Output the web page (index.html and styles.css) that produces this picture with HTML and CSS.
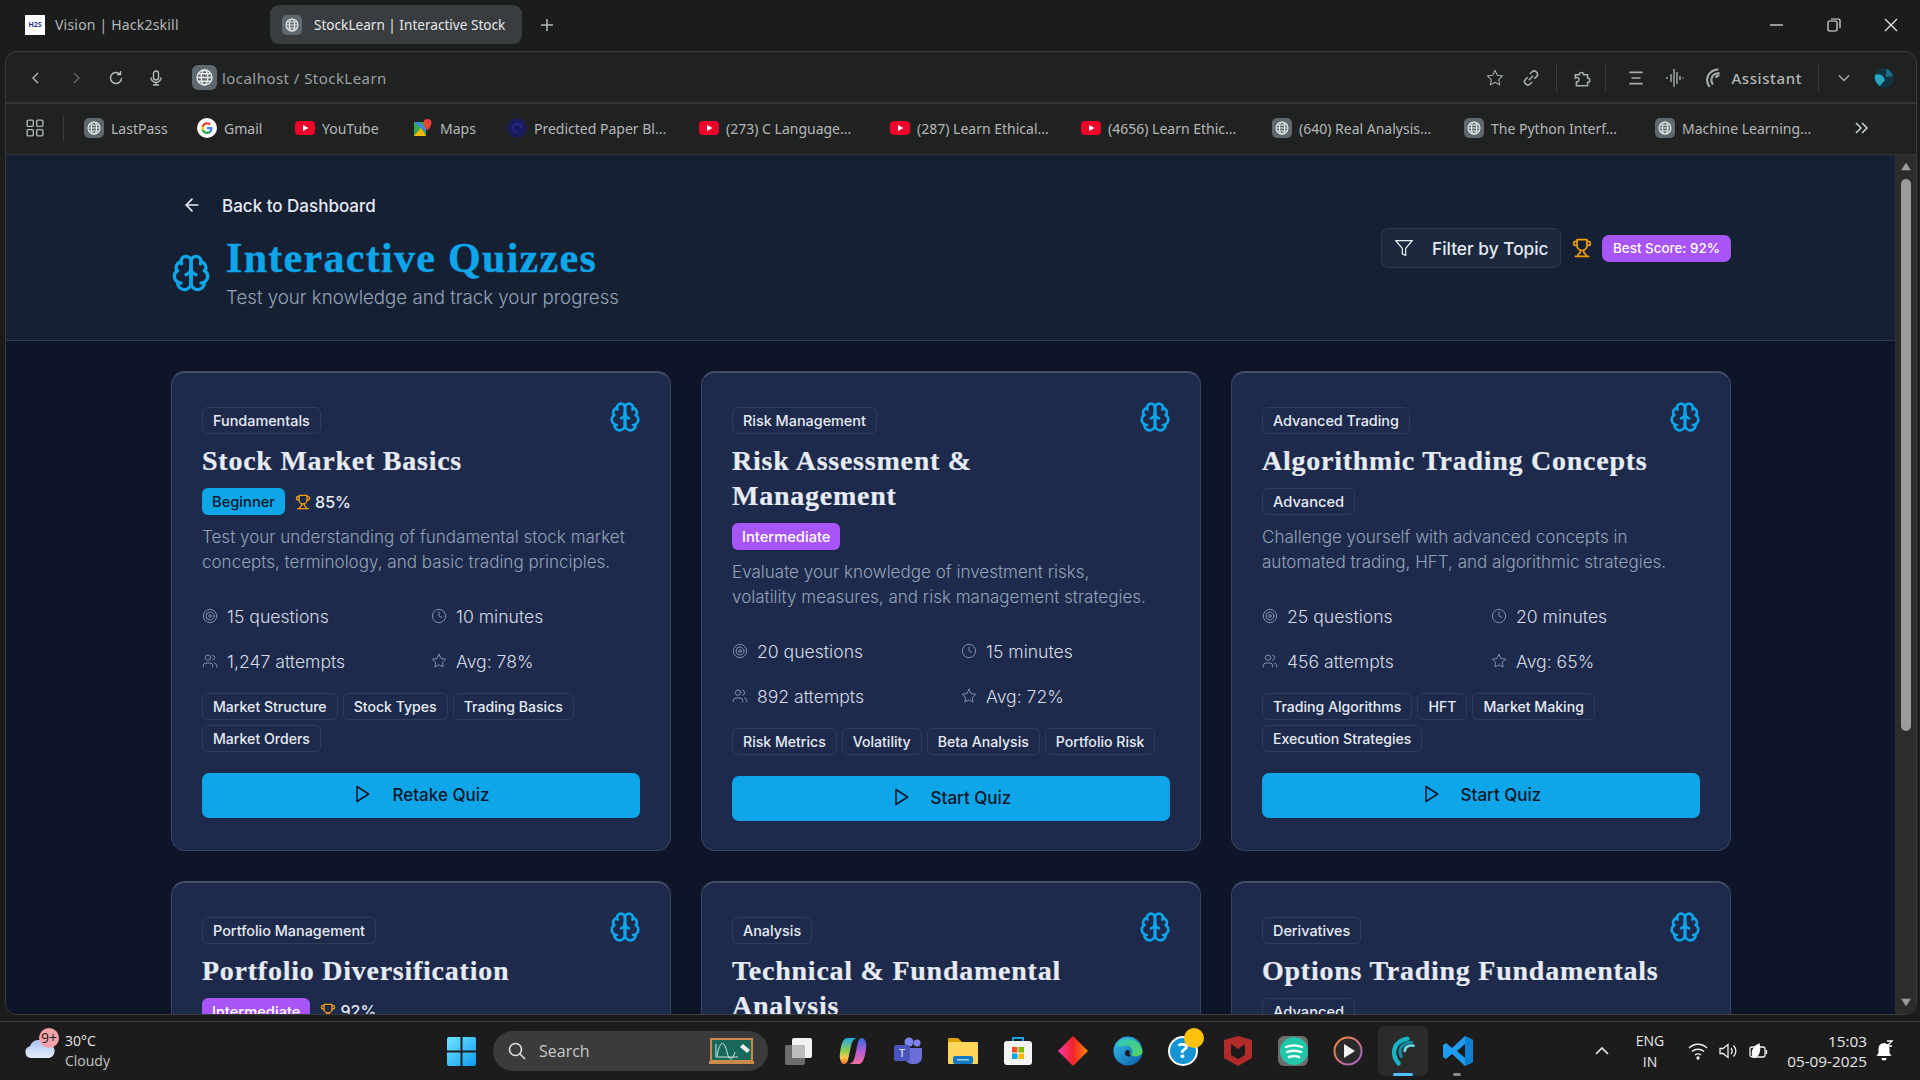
FILE: index.html
```html
<!DOCTYPE html>
<html lang="en">
  <head>
    <meta charset="UTF-8" />
    <title>StockLearn | Interactive Stock Quizzes</title>
    <link rel="stylesheet" href="styles.css">
  </head>
  <body>
    <svg class="sprite" xmlns="http://www.w3.org/2000/svg">
      <symbol id="i-brain" viewBox="0 0 24 24"><path d="M12 5a3 3 0 1 0-5.997.125 4 4 0 0 0-2.526 5.77 4 4 0 0 0 .556 6.588A4 4 0 1 0 12 18Z"/><path d="M12 5a3 3 0 1 1 5.997.125 4 4 0 0 1 2.526 5.77 4 4 0 0 1-.556 6.588A4 4 0 1 1 12 18Z"/><path d="M15 13a4.5 4.5 0 0 1-3-4 4.5 4.5 0 0 1-3 4"/><path d="M12 9v9"/><path d="M17.599 6.5a3 3 0 0 0 .399-1.375"/><path d="M6.003 5.125A3 3 0 0 0 6.401 6.5"/><path d="M3.477 10.896a4 4 0 0 1 .585-.396"/><path d="M19.938 10.5a4 4 0 0 1 .585.396"/><path d="M6 18a4 4 0 0 1-1.967-.516"/><path d="M19.967 17.484A4 4 0 0 1 18 18"/></symbol>
      <symbol id="i-trophy" viewBox="0 0 24 24"><path d="M6 9H4.5a2.5 2.5 0 0 1 0-5H6"/><path d="M18 9h1.5a2.5 2.5 0 0 0 0-5H18"/><path d="M4 22h16"/><path d="M10 14.66V17c0 .55-.47.98-.97 1.21C7.85 18.75 7 20.24 7 22"/><path d="M14 14.66V17c0 .55.47.98.97 1.21C16.15 18.75 17 20.24 17 22"/><path d="M18 2H6v7a6 6 0 0 0 12 0V2Z"/></symbol>
      <symbol id="i-target" viewBox="0 0 24 24"><circle cx="12" cy="12" r="10"/><circle cx="12" cy="12" r="6"/><circle cx="12" cy="12" r="2"/></symbol>
      <symbol id="i-clock" viewBox="0 0 24 24"><circle cx="12" cy="12" r="10"/><polyline points="12 6 12 12 16 14"/></symbol>
      <symbol id="i-users" viewBox="0 0 24 24"><path d="M16 21v-2a4 4 0 0 0-4-4H6a4 4 0 0 0-4 4v2"/><circle cx="9" cy="7" r="4"/><path d="M22 21v-2a4 4 0 0 0-3-3.87"/><path d="M16 3.13a4 4 0 0 1 0 7.75"/></symbol>
      <symbol id="i-star" viewBox="0 0 24 24"><polygon points="12 2 15.09 8.26 22 9.27 17 14.14 18.18 21.02 12 17.77 5.82 21.02 7 14.14 2 9.27 8.91 8.26 12 2"/></symbol>
      <symbol id="i-play" viewBox="0 0 24 24"><polygon points="6 3 20 12 6 21 6 3"/></symbol>
      <symbol id="i-filter" viewBox="0 0 24 24"><polygon points="22 3 2 3 10 12.46 10 19 14 21 14 12.46 22 3"/></symbol>
      <symbol id="i-arrow" viewBox="0 0 24 24"><path d="m12 19-7-7 7-7"/><path d="M19 12H5"/></symbol>
      <symbol id="i-globe" viewBox="0 0 20 20"><rect width="20" height="20" rx="5" fill="#5f6a70" stroke="none"/><g fill="none" stroke="#e6e8e8" stroke-width="1.1"><circle cx="10" cy="10" r="6"/><ellipse cx="10" cy="10" rx="2.6" ry="6"/><path d="M4 10h12M4.9 7h10.2M4.9 13h10.2"/></g></symbol>
      <symbol id="i-yt" viewBox="0 0 20 20"><rect y="3" width="20" height="14" rx="4" fill="#f4002a" stroke="none"/><polygon points="8 7 13.500 10 8 13" fill="#fff" stroke="none"/></symbol>
    </svg>

    <div class="tabbar">
      <div class="tab">
        <span class="h2s-icon">H2S</span>
        <span>Vision | Hack2skill</span>
      </div>
      <div class="tab tab-active">
        <svg class="fav"><use href="#i-globe"/></svg>
        <span class="tab-title">StockLearn | Interactive Stock</span>
      </div>
      <svg class="tab-plus" viewBox="0 0 16 16"><path d="M8 2v12M2 8h12"/></svg>
      <div class="win-controls">
        <svg viewBox="0 0 16 16"><path d="M1 8h13"/></svg>
        <svg viewBox="0 0 16 16"><rect x="2" y="4" width="9" height="10" rx="1.500"/><path d="M5 2h7.500A1.500 1.500 0 0 1 14 3.500V11"/></svg>
        <svg viewBox="0 0 16 16"><path d="M2 2l12 12M14 2L2 14"/></svg>
      </div>
    </div>

    <div class="window">
      <div class="toolbar">
        <div class="nav-icons">
          <svg viewBox="0 0 16 16"><path d="M10 3L5 8l5 5"/></svg>
          <svg class="dim" viewBox="0 0 16 16"><path d="M6 3l5 5-5 5"/></svg>
          <svg viewBox="0 0 16 16"><path d="M13.500 8a5.500 5.500 0 1 1-1.700-4M12.500 1v3.500H9"/></svg>
          <svg viewBox="0 0 16 16"><rect x="5.500" y="1" width="5" height="9" rx="2.500"/><path d="M3 7.500a5 5 0 0 0 10 0M8 12.500V15M5 15h6"/></svg>
        </div>
        <svg class="fav fav-url"><use href="#i-globe"/></svg>
        <span class="url">localhost / StockLearn</span>
        <div class="tool-right">
          <svg class="tool-icon star" viewBox="0 0 24 24"><use href="#i-star"/></svg>
          <svg class="tool-icon link" viewBox="0 0 16 16"><path d="M7 4.500l1.800-1.800a2.900 2.900 0 0 1 4.100 4.100L11 8.700M9 11.500l-1.800 1.800a2.900 2.900 0 0 1-4.100-4.100L5 7.300M6 10l4-4"/></svg>
          <span class="tool-sep sep-a"></span>
          <svg class="tool-icon puzzle" viewBox="0 0 18 18"><path d="M3 6h3.500a2 2 0 1 1 4 0H14v3a2 2 0 1 1 0 4v3H4v-3.500a2 2 0 1 0-1-3.500Z"/></svg>
          <span class="tool-sep sep-b"></span>
          <svg class="tool-icon list" viewBox="0 0 16 16"><path d="M2 3h12M4 8h8M2 13h12"/></svg>
          <svg class="tool-icon wave" viewBox="0 0 20 20"><path d="M2 9v2M6 6v8M9 1v18M12 4v12M15 8v4M18 9.500v1"/></svg>
          <svg class="tool-icon spark" viewBox="0 0 20 20"><path d="M6 18C1.500 12 4 3 14 2M9 16C6 11 8 6 15 5.500M12 10c0-1.500 1-2.500 3-2.500"/></svg>
          <span class="assistant">Assistant</span>
          <span class="tool-sep sep-c"></span>
          <svg class="tool-icon chevron" viewBox="0 0 16 16"><path d="M3 5.500l5 5 5-5"/></svg>
          <svg class="avatar" viewBox="0 0 20 20"><circle cx="10" cy="10" r="10" fill="#12343f"/><path d="M1 7c5-2 8 0 10 5l-5 6C3 16 0 12 1 7Z" fill="#2ba6c4"/><path d="M12 1c4 1 6 4 7 7l-7 1Z" fill="#1d6f87"/></svg>
        </div>
      </div>

      <div class="bookmarks">
        <svg class="apps" viewBox="0 0 16 16"><rect x="1" y="1" width="5.500" height="5.500" rx="1"/><rect x="9.500" y="1" width="5.500" height="5.500" rx="1"/><rect x="1" y="9.500" width="5.500" height="5.500" rx="1"/><rect x="9.500" y="9.500" width="5.500" height="5.500" rx="1"/></svg>
        <span class="bm-sep"></span>
        <div class="bm bm-lastpass"><svg class="fav"><use href="#i-globe"/></svg><span>LastPass</span></div>
        <div class="bm bm-gmail">
          <svg class="fav" viewBox="0 0 20 20"><circle cx="10" cy="10" r="10" fill="#fff"/><path d="M15.500 10.200c0-.400 0-.800-.100-1.200H10v2.300h3.100a2.700 2.700 0 0 1-1.100 1.700v1.500h1.900c1-1 1.600-2.500 1.600-4.300Z" fill="#4285f4"/><path d="M10 16c1.600 0 2.900-.500 3.900-1.500L12 13c-.5.400-1.200.600-2 .600-1.500 0-2.800-1-3.300-2.400H4.800v1.500A6 6 0 0 0 10 16Z" fill="#34a853"/><path d="M6.700 11.200a3.600 3.600 0 0 1 0-2.300V7.400H4.800a6 6 0 0 0 0 5.300Z" fill="#fbbc05"/><path d="M10 6.400c.9 0 1.600.300 2.200.900l1.700-1.700A6 6 0 0 0 4.800 7.400l1.900 1.500C7.200 7.400 8.500 6.400 10 6.400Z" fill="#ea4335"/></svg>
          <span>Gmail</span>
        </div>
        <div class="bm bm-yt"><svg class="fav"><use href="#i-yt"/></svg><span>YouTube</span></div>
        <div class="bm bm-maps">
          <svg class="fav" viewBox="0 0 20 20"><polygon points="1 4 13 4 13 18 1 18" fill="#34a853"/><polygon points="1 18 8 10 13 18" fill="#fbbc05"/><polygon points="1 4 6 4 13 11 13 14" fill="#4285f4"/><path d="M14.500 1a4 4 0 0 0-4 4c0 3 4 7.500 4 7.500s4-4.500 4-7.500a4 4 0 0 0-4-4Z" fill="#ea4335"/></svg>
          <span>Maps</span>
        </div>
        <div class="bm bm-paper">
          <svg class="fav" viewBox="0 0 20 20"><circle cx="10" cy="10" r="10" fill="#1a1a5c"/><path d="M10 14a4 4 0 1 1 4-4" fill="none" stroke="#2e2ea0" stroke-width="1.500"/></svg>
          <span>Predicted Paper Bl...</span>
        </div>
        <div class="bm bm-c"><svg class="fav"><use href="#i-yt"/></svg><span>(273) C Language...</span></div>
        <div class="bm bm-eth"><svg class="fav"><use href="#i-yt"/></svg><span>(287) Learn Ethical...</span></div>
        <div class="bm bm-eth2"><svg class="fav"><use href="#i-yt"/></svg><span>(4656) Learn Ethic...</span></div>
        <div class="bm bm-real"><svg class="fav"><use href="#i-globe"/></svg><span>(640) Real Analysis...</span></div>
        <div class="bm bm-py"><svg class="fav"><use href="#i-globe"/></svg><span>The Python Interf...</span></div>
        <div class="bm bm-ml"><svg class="fav"><use href="#i-globe"/></svg><span>Machine Learning...</span></div>
        <svg class="bm-more" viewBox="0 0 16 16"><path d="M3 3l5 5-5 5M9 3l5 5-5 5"/></svg>
      </div>

      <div class="viewport">
        <div class="page">
          <header class="page-header">
            <div class="header-left">
              <a class="back-link">
                <svg class="icon icon-back"><use href="#i-arrow"/></svg>
                <span>Back to Dashboard</span>
              </a>
              <div class="title-row">
                <svg class="icon icon-title"><use href="#i-brain"/></svg>
                <div>
                  <h1>Interactive Quizzes</h1>
                  <p class="subtitle">Test your knowledge and track your progress</p>
                </div>
              </div>
            </div>
            <div class="header-right">
              <button class="filter-btn">
                <svg class="icon icon-filter"><use href="#i-filter"/></svg>
                <span>Filter by Topic</span>
              </button>
              <svg class="icon icon-best"><use href="#i-trophy"/></svg>
              <span class="best-score">Best Score: 92%</span>
            </div>
          </header>

          <main class="quiz-grid">
            <article class="card">
              <div class="card-top">
                <span class="chip">Fundamentals</span>
                <svg class="icon icon-card"><use href="#i-brain"/></svg>
              </div>
              <h3>Stock Market Basics</h3>
              <div class="level-row">
                <span class="level level-beginner">Beginner</span>
                <svg class="icon icon-score"><use href="#i-trophy"/></svg>
                <span class="score">85%</span>
              </div>
              <p class="desc">Test your understanding of fundamental stock market<br>concepts, terminology, and basic trading principles.</p>
              <div class="stats">
                <div class="stat"><svg class="icon"><use href="#i-target"/></svg>15 questions</div>
                <div class="stat"><svg class="icon"><use href="#i-clock"/></svg>10 minutes</div>
                <div class="stat"><svg class="icon"><use href="#i-users"/></svg>1,247 attempts</div>
                <div class="stat"><svg class="icon"><use href="#i-star"/></svg>Avg: 78%</div>
              </div>
              <div class="chips">
                <span class="chip">Market Structure</span>
                <span class="chip">Stock Types</span>
                <span class="chip">Trading Basics</span>
                <span class="chip">Market Orders</span>
              </div>
              <button class="quiz-btn"><svg class="icon icon-play"><use href="#i-play"/></svg>Retake Quiz</button>
            </article>

            <article class="card">
              <div class="card-top">
                <span class="chip">Risk Management</span>
                <svg class="icon icon-card"><use href="#i-brain"/></svg>
              </div>
              <h3>Risk Assessment &amp;<br>Management</h3>
              <div class="level-row">
                <span class="level level-intermediate">Intermediate</span>
              </div>
              <p class="desc">Evaluate your knowledge of investment risks,<br>volatility measures, and risk management strategies.</p>
              <div class="stats">
                <div class="stat"><svg class="icon"><use href="#i-target"/></svg>20 questions</div>
                <div class="stat"><svg class="icon"><use href="#i-clock"/></svg>15 minutes</div>
                <div class="stat"><svg class="icon"><use href="#i-users"/></svg>892 attempts</div>
                <div class="stat"><svg class="icon"><use href="#i-star"/></svg>Avg: 72%</div>
              </div>
              <div class="chips">
                <span class="chip">Risk Metrics</span>
                <span class="chip">Volatility</span>
                <span class="chip">Beta Analysis</span>
                <span class="chip">Portfolio Risk</span>
              </div>
              <button class="quiz-btn"><svg class="icon icon-play"><use href="#i-play"/></svg>Start Quiz</button>
            </article>

            <article class="card">
              <div class="card-top">
                <span class="chip">Advanced Trading</span>
                <svg class="icon icon-card"><use href="#i-brain"/></svg>
              </div>
              <h3>Algorithmic Trading Concepts</h3>
              <div class="level-row">
                <span class="level level-advanced">Advanced</span>
              </div>
              <p class="desc">Challenge yourself with advanced concepts in<br>automated trading, HFT, and algorithmic strategies.</p>
              <div class="stats">
                <div class="stat"><svg class="icon"><use href="#i-target"/></svg>25 questions</div>
                <div class="stat"><svg class="icon"><use href="#i-clock"/></svg>20 minutes</div>
                <div class="stat"><svg class="icon"><use href="#i-users"/></svg>456 attempts</div>
                <div class="stat"><svg class="icon"><use href="#i-star"/></svg>Avg: 65%</div>
              </div>
              <div class="chips">
                <span class="chip">Trading Algorithms</span>
                <span class="chip">HFT</span>
                <span class="chip">Market Making</span>
                <span class="chip">Execution Strategies</span>
              </div>
              <button class="quiz-btn"><svg class="icon icon-play"><use href="#i-play"/></svg>Start Quiz</button>
            </article>

            <article class="card card-cut">
              <div class="card-top">
                <span class="chip">Portfolio Management</span>
                <svg class="icon icon-card"><use href="#i-brain"/></svg>
              </div>
              <h3>Portfolio Diversification</h3>
              <div class="level-row">
                <span class="level level-intermediate">Intermediate</span>
                <svg class="icon icon-score"><use href="#i-trophy"/></svg>
                <span class="score">92%</span>
              </div>
            </article>

            <article class="card card-cut">
              <div class="card-top">
                <span class="chip">Analysis</span>
                <svg class="icon icon-card"><use href="#i-brain"/></svg>
              </div>
              <h3>Technical &amp; Fundamental<br>Analysis</h3>
            </article>

            <article class="card card-cut">
              <div class="card-top">
                <span class="chip">Derivatives</span>
                <svg class="icon icon-card"><use href="#i-brain"/></svg>
              </div>
              <h3>Options Trading Fundamentals</h3>
              <div class="level-row">
                <span class="level level-advanced">Advanced</span>
              </div>
            </article>
          </main>
        </div>
        <div class="scrollbar">
          <svg class="scroll-arrow" viewBox="0 0 10 10"><path d="M5 1.500L9.500 8.500H.5Z"/></svg>
          <div class="scroll-track"><div class="scroll-thumb"></div></div>
          <svg class="scroll-arrow" viewBox="0 0 10 10"><path d="M5 8.500L.5 1.500h9Z"/></svg>
        </div>
      </div>
    </div>

    <footer class="taskbar">
      <div class="weather">
        <svg class="cloud" viewBox="0 0 30 20"><defs><linearGradient id="cloud-fill" x1="0" y1="0" x2="0" y2="1"><stop offset="0" stop-color="#a9c4f5"/><stop offset="1" stop-color="#e4edfb"/></linearGradient></defs><path d="M6 20a6 6 0 0 1-1-11.800A9 9 0 0 1 21 6a7 7 0 0 1 3 14Z" fill="url(#cloud-fill)"/></svg>
        <span class="weather-badge">9+</span>
        <div class="weather-text">
          <div class="temp">30°C</div>
          <div class="cond">Cloudy</div>
        </div>
      </div>

      <svg class="win-logo" viewBox="0 0 29 29"><defs><linearGradient id="win-fill" x1="0" y1="0" x2="1" y2="1"><stop offset="0" stop-color="#6fe6ff"/><stop offset="1" stop-color="#0f9bf5"/></linearGradient></defs><path d="M0 2a2 2 0 0 1 2-2h11.500v13.500H0ZM15.500 0H27a2 2 0 0 1 2 2v11.500H15.500ZM0 15.500h13.500V29H2a2 2 0 0 1-2-2ZM15.500 15.500H29V27a2 2 0 0 1-2 2H15.500Z" fill="url(#win-fill)"/></svg>

      <div class="search-box">
        <svg class="search-icon" viewBox="0 0 18 18"><circle cx="7.500" cy="7.500" r="6"/><path d="M12 12l5 5"/></svg>
        <span>Search</span>
        <svg class="board" viewBox="0 0 45 26"><rect x="2" y="1" width="41" height="22" fill="#17685a" stroke="#c98a4b" stroke-width="2"/><rect y="23" width="45" height="3" fill="#c98a4b"/><path d="M8 18c3-16 7-16 10-4s6 6 8 0" fill="none" stroke="#cfe7df"/><path d="M7 6v13h22" fill="none" stroke="#cfe7df"/><path d="M31 9l3-3 7 6-3 3Z" fill="#eee"/></svg>
      </div>

      <div class="task-apps">
        <div class="task-app">
          <svg viewBox="0 0 30 30"><rect x="2" y="9" width="20" height="20" rx="2" fill="#6d6d6d"/><rect x="9" y="2" width="20" height="20" rx="2" fill="#f2f2f2"/><rect x="9" y="9" width="13" height="13" fill="#bdbdbd"/></svg>
        </div>
        <div class="task-app">
          <svg viewBox="0 0 30 30"><defs><linearGradient id="cop-a" x1="0" y1="0" x2="0" y2="1"><stop offset="0" stop-color="#1fa7e0"/><stop offset=".5" stop-color="#8fd14f"/><stop offset=".75" stop-color="#f7c948"/><stop offset="1" stop-color="#f0703c"/></linearGradient><linearGradient id="cop-b" x1="0" y1="0" x2="0" y2="1"><stop offset="0" stop-color="#2b6fe0"/><stop offset=".5" stop-color="#b45ad6"/><stop offset="1" stop-color="#f2709c"/></linearGradient></defs><path d="M9 2h10c-4 1-5 4-6 8l-3 14c-1 3-2 4-4 4-3 0-5-5-4-11C3 9 5 2 9 2Z" fill="url(#cop-a)"/><path d="M21 28H11c4-1 5-4 6-8l3-14c1-3 2-4 4-4 3 0 5 5 4 11-1 8-3 15-7 15Z" fill="url(#cop-b)"/></svg>
        </div>
        <div class="task-app">
          <svg viewBox="0 0 30 30"><circle cx="24" cy="7" r="3.500" fill="#7b83eb"/><circle cx="16" cy="6" r="4.500" fill="#7b83eb"/><path d="M12 12h17v9a7 7 0 0 1-7 7h-3a7 7 0 0 1-7-7Z" fill="#6a70d6"/><rect x="1" y="9" width="16" height="16" rx="2" fill="#4b53bc"/><text class="teams-t" x="9" y="21">T</text></svg>
        </div>
        <div class="task-app">
          <svg viewBox="0 0 30 30"><path d="M0 3a1 1 0 0 1 1-1h9l4 4h16v4H0Z" fill="#d9a200"/><rect y="6" width="30" height="22" rx="1" fill="#ffd65c"/><rect x="5" y="20" width="20" height="8" rx="2" fill="#1578c2"/><rect x="9" y="23" width="12" height="1.500" fill="#9bd0f5"/></svg>
        </div>
        <div class="task-app">
          <svg viewBox="0 0 30 30"><path d="M10 5V2h10v3" fill="none" stroke="#1ba1e2" stroke-width="2"/><rect x="1" y="5" width="28" height="24" rx="3" fill="#f5f5f5"/><rect x="9" y="11" width="5.500" height="5.500" fill="#f25022"/><rect x="15.500" y="11" width="5.500" height="5.500" fill="#7fba00"/><rect x="9" y="17.500" width="5.500" height="5.500" fill="#00a4ef"/><rect x="15.500" y="17.500" width="5.500" height="5.500" fill="#ffb900"/></svg>
        </div>
        <div class="task-app">
          <svg viewBox="0 0 30 30"><defs><linearGradient id="dia" x1="0" y1="0" x2="1" y2="0"><stop offset="0" stop-color="#f23aa6"/><stop offset=".5" stop-color="#f5222d"/><stop offset="1" stop-color="#f58a00"/></linearGradient></defs><path d="M15 0l15 15-15 15L0 15Z" fill="url(#dia)"/></svg>
        </div>
        <div class="task-app">
          <svg viewBox="0 0 30 30"><defs><linearGradient id="edge-a" x1="0" y1="0" x2="1" y2="1"><stop offset="0" stop-color="#35c1f1"/><stop offset="1" stop-color="#0c59a4"/></linearGradient><linearGradient id="edge-b" x1="0" y1="0" x2="1" y2="1"><stop offset="0" stop-color="#2bc7c0"/><stop offset="1" stop-color="#5bd35f"/></linearGradient></defs><circle cx="15" cy="15" r="14.500" fill="url(#edge-a)"/><path d="M3 9C8 0 26 0 29.500 15c.5 5-8 7-11 4 3-5-1-10-7-9-4 .5-7 1-8.500-1Z" fill="url(#edge-b)"/><path d="M15 14c-2 0-3.500 2-3 4 .5 2 3 3 6 2-1.500-1-2-3-1-5Z" fill="#1b1b1b"/></svg>
        </div>
        <div class="task-app task-help">
          <svg viewBox="0 0 30 30"><circle cx="15" cy="15" r="14" fill="#1494d2" stroke="#fff" stroke-width="2"/><text class="help-q" x="15" y="22">?</text></svg>
          <span class="help-dot"></span>
        </div>
        <div class="task-app">
          <svg viewBox="0 0 28 30"><path d="M0 4l14-4 14 4v18l-14 8-14-8Z" fill="#b22a2a"/><path d="M7 8v11l7 4 7-4V8l-7 5Z" fill="#1b1b1b"/></svg>
        </div>
        <div class="task-app">
          <svg viewBox="0 0 30 30"><rect width="30" height="30" rx="6" fill="#6d6d6d"/><circle cx="16" cy="15" r="14" fill="#22c7a9"/><path d="M8 11c5-2 11-2 16 0M9 16c4-1.500 10-1.500 14 0M11 21c3-1 7-1 10 0" fill="none" stroke="#f3fffb" stroke-width="2.400" stroke-linecap="round"/></svg>
        </div>
        <div class="task-app">
          <svg viewBox="0 0 30 30"><defs><linearGradient id="pl" x1="0" y1="0" x2="1" y2="1"><stop offset="0" stop-color="#f58a2a"/><stop offset="1" stop-color="#a15dd6"/></linearGradient></defs><circle cx="15" cy="15" r="13.500" fill="#2a2a2a" stroke="url(#pl)" stroke-width="2"/><path d="M11 8l11 7-11 7Z" fill="#f2f2f2"/></svg>
        </div>
        <div class="task-app task-active">
          <svg viewBox="0 0 30 34" fill="none" stroke-linecap="round"><path d="M10 31C1 20 4 6 20 3" stroke="#17b3c4" stroke-width="5"/><path d="M13 23C9 14 15 7 25 7" stroke="#0f8fa5" stroke-width="3.500"/><path d="M17 17c0-4 4-7 10-6" stroke="#6fdde8" stroke-width="3"/></svg>
          <span class="task-dot task-dot-on"></span>
        </div>
        <div class="task-app">
          <svg viewBox="0 0 30 30"><path d="M22 0l8 4v22l-8 4L9 18l-6 5-3-2V9l3-2 6 5Z" fill="#1f9cf0"/><path d="M22 8l-8 7 8 7Z" fill="#1b1b1b"/><path d="M22 0v30l8-4V4Z" fill="#0f7fd0"/></svg>
          <span class="task-dot"></span>
        </div>
      </div>

      <div class="tray">
        <svg class="tray-chevron" viewBox="0 0 16 16"><path d="M2 11l6-6 6 6"/></svg>
        <div class="lang"><div>ENG</div><div>IN</div></div>
        <svg class="tray-icon" viewBox="0 0 20 20"><path d="M1 7c5-5 13-5 18 0M4 10.500c3.500-3 8.500-3 12 0M7 14c2-1.500 4-1.500 6 0"/><circle cx="10" cy="17" r="1" fill="#fff"/></svg>
        <svg class="tray-icon" viewBox="0 0 20 20"><path d="M2 7.500h3l5-4v13l-5-4H2ZM13 7c1.500 2 1.500 4 0 6M15.500 4.500c3 3.500 3 7.500 0 11"/></svg>
        <svg class="tray-icon" viewBox="0 0 20 20"><rect x="2" y="6" width="15" height="10" rx="2"/><path d="M18.500 9v4"/><path d="M5 16c-2-6 1-11 6-13 1 4 1 10-3 13Z" fill="#fff"/></svg>
        <div class="clock"><div>15:03</div><div>05-09-2025</div></div>
        <svg class="bell" viewBox="0 0 20 22"><path d="M10 3a5.500 5.500 0 0 0-5.500 5.500V13L2.500 16h15l-2-3V8.500A5.500 5.500 0 0 0 10 3Z" fill="#fff"/><path d="M7.500 18h5a2.500 2.500 0 0 1-5 0Z" fill="#fff"/><path d="M13 1h5l-5 5h5" fill="none" stroke="#fff" stroke-width="1.300"/></svg>
      </div>
    </footer>
  </body>
</html>
```

FILE: styles.css
```css
* {
  box-sizing: border-box;
}
html,
body {
  margin: 0;
  height: 100%;
}
body {
  width: 1920px;
  height: 1080px;
  display: flex;
  flex-direction: column;
  overflow: hidden;
  background-color: #1b1c1c;
  font-family: "Noto Sans", sans-serif;
  color: #c9cccc;
}
.sprite {
  display: none;
}
.icon {
  width: 16px;
  height: 16px;
  flex: none;
  fill: none;
  stroke: currentColor;
  stroke-width: 2;
  stroke-linecap: round;
  stroke-linejoin: round;
}
.fav {
  width: 20px;
  height: 20px;
  flex: none;
}

/* browser tabs */
.tabbar {
  height: 51px;
  flex: none;
  display: flex;
  align-items: flex-start;
  padding-top: 5px;
  font-size: 14px;
  letter-spacing: 0.2px;
}
.tab {
  height: 39px;
  display: flex;
  align-items: center;
  gap: 10px;
  padding-left: 25px;
  width: 270px;
  color: #b5b8b8;
}
.h2s-icon {
  width: 20px;
  height: 20px;
  background-color: #fff;
  color: #26308c;
  font-size: 7px;
  font-weight: 700;
  line-height: 20px;
  text-align: center;
  letter-spacing: 0;
}
.tab-active {
  width: 252px;
  padding-left: 12px;
  gap: 12px;
  background-color: #3a3d3f;
  border-radius: 9px;
  color: #e6e8e8;
}
.tab-title {
  white-space: nowrap;
  font-size: 13.600px;
  letter-spacing: 0;
}
.tab-plus {
  width: 16px;
  height: 16px;
  margin: 12px 0 0 17px;
  fill: none;
  stroke: #b5b8b8;
  stroke-width: 1.500;
}
.win-controls {
  margin-left: auto;
  display: flex;
  gap: 41px;
  padding: 12px 21px 0 0;
}
.win-controls svg {
  width: 16px;
  height: 16px;
  fill: none;
  stroke: #e8e8e8;
  stroke-width: 1.200;
}

/* browser window */
.window {
  flex: none;
  height: 964px;
  margin: 0 3px 0 5px;
  border: 1px solid #3a3c3c;
  border-radius: 12px;
  overflow: hidden;
  display: flex;
  flex-direction: column;
  background-color: #202222;
}
.toolbar {
  height: 52px;
  flex: none;
  display: flex;
  align-items: center;
  border-bottom: 2px solid #343636;
  padding: 1px 0 0 22px;
  font-size: 15px;
}
.nav-icons {
  display: flex;
  gap: 24px;
}
.nav-icons svg {
  width: 16px;
  height: 16px;
  fill: none;
  stroke: #b8bbbb;
  stroke-width: 1.400;
}
.nav-icons .dim {
  stroke: #666969;
}
.fav-url {
  width: 25px;
  height: 25px;
  margin-left: 28px;
}
.url {
  margin-left: 5px;
  color: #9da0a0;
  letter-spacing: 0.450px;
}
.tool-right {
  margin-left: auto;
  display: flex;
  align-items: center;
  padding-right: 22px;
}
.tool-icon {
  width: 18px;
  height: 18px;
  fill: none;
  stroke: #a9acac;
  stroke-width: 1.400;
}
.link {
  margin-left: 18px;
}
.tool-sep {
  width: 1px;
  height: 28px;
  background-color: #3a3c3c;
}
.sep-a {
  margin: 0 15px 0 16px;
}
.puzzle {
  width: 20px;
  height: 20px;
}
.sep-b {
  margin: 0 21px 0 13px;
}
.wave {
  width: 20px;
  height: 20px;
  margin-left: 20px;
}
.spark {
  width: 22px;
  height: 22px;
  margin-left: 18px;
  stroke-width: 1.900;
}
.assistant {
  margin-left: 6px;
  font-weight: 500;
  letter-spacing: 0.600px;
  color: #b5b8b8;
}
.sep-c {
  margin: 0 17px 0 16px;
}
.chevron {
  width: 16px;
  height: 16px;
}
.avatar {
  width: 20px;
  height: 20px;
  margin-left: 22px;
}

/* bookmarks */
.bookmarks {
  height: 51px;
  flex: none;
  display: flex;
  align-items: center;
  padding: 0 0 2px 20px;
  font-size: 14px;
  color: #b5b8b8;
  border-bottom: 1px solid #343636;
}
.apps {
  width: 18px;
  height: 18px;
  fill: none;
  stroke: #b5b8b8;
  stroke-width: 1.200;
}
.bm-sep {
  width: 1px;
  height: 25px;
  margin: 0 20px 0 19px;
  background-color: #3a3c3c;
}
.bm {
  display: flex;
  align-items: center;
  gap: 7px;
  white-space: nowrap;
}
.bm-lastpass { width: 113px; }
.bm-gmail { width: 98px; }
.bm-yt { width: 118px; }
.bm-maps { width: 94px; }
.bm-paper { width: 192px; }
.bm-c { width: 191px; }
.bm-eth { width: 191px; }
.bm-eth2 { width: 191px; }
.bm-real { width: 192px; }
.bm-py { width: 191px; }
.bm-ml { width: 190px; }
.bm-more {
  width: 16px;
  height: 16px;
  margin-left: 8px;
  fill: none;
  stroke: #c9cccc;
  stroke-width: 1.600;
}

/* app page */
.viewport {
  flex: 1;
  min-height: 0;
  display: flex;
}
.page {
  flex: 1;
  min-width: 0;
  background-color: #0e1528;
  overflow: hidden;
  font-family: Inter, sans-serif;
  color: #e6ebf4;
}
.page-header {
  height: 186px;
  background-color: #152033;
  border-bottom: 1px solid #2d3a50;
  display: flex;
  justify-content: space-between;
  padding: 0 164px 0 165px;
}
.header-left {
  padding-top: 40px;
}
.back-link {
  display: flex;
  align-items: center;
  gap: 20px;
  margin-left: 11px;
  font-size: 17px;
  font-weight: 500;
  line-height: 22px;
}
.icon-back {
  width: 20px;
  height: 20px;
  margin-top: -3px;
}
.title-row {
  display: flex;
  align-items: center;
  gap: 15px;
  margin-top: 17px;
}
.icon-title {
  width: 40px;
  height: 40px;
  color: #0ea5e9;
  margin-top: 1px;
}
h1 {
  margin: 0;
  font-family: "Liberation Serif", serif;
  font-size: 42px;
  font-weight: 700;
  line-height: 49px;
  letter-spacing: 1.300px;
  -webkit-text-stroke: 0.400px #0ea5e9;
  color: #0ea5e9;
}
.subtitle {
  margin: 2px 0 0;
  font-size: 18.700px;
  font-weight: 300;
  line-height: 26px;
  color: #94a3b8;
}
.header-right {
  display: flex;
  align-items: center;
  height: 40px;
  margin-top: 73px;
}
.filter-btn {
  display: flex;
  align-items: center;
  gap: 18px;
  width: 180px;
  height: 40px;
  padding: 0 0 0 12px;
  background-color: #1b283d;
  border: 1px solid #2d3a50;
  border-radius: 7px;
  font: 500 17.300px Inter, sans-serif;
  color: #e6ebf4;
  white-space: nowrap;
}
.icon-filter {
  width: 20px;
  height: 20px;
  stroke-width: 1.500;
}
.icon-best {
  width: 20px;
  height: 20px;
  margin: 0 10px 0 11px;
  color: #f59e0b;
}
.best-score {
  width: 129px;
  height: 27px;
  background-color: #a855f7;
  border-radius: 7px;
  font-size: 13.400px;
  font-weight: 500;
  line-height: 27px;
  text-align: center;
  color: #fff;
}

/* quiz cards */
.quiz-grid {
  display: grid;
  grid-template-columns: repeat(3, 500px);
  gap: 30px;
  padding: 30px 164px 0 165px;
}
.card {
  display: flex;
  flex-direction: column;
  align-items: flex-start;
  padding: 34px 30px 29px;
  background-color: #1d2a4b;
  border: 1px solid #39445f;
  border-top: 2px solid #434e69;
  border-radius: 14px;
}
.card-cut {
  min-height: 480px;
}
.card-top {
  width: 100%;
  display: flex;
  justify-content: space-between;
  align-items: flex-start;
}
.icon-card {
  width: 32px;
  height: 32px;
  margin: -6px -1px 0 0;
  color: #0ea5e9;
}
.chip {
  display: inline-block;
  height: 27px;
  padding: 0 10px;
  border: 1px solid #303c58;
  border-radius: 6px;
  font-size: 14.400px;
  font-weight: 500;
  line-height: 25px;
  color: #e6ebf4;
  white-space: nowrap;
}
h3 {
  margin: 9px 0 0;
  font-family: "Liberation Serif", serif;
  font-size: 28px;
  font-weight: 700;
  line-height: 35px;
  letter-spacing: 0.750px;
  -webkit-text-stroke: 0.200px #e6ebf4;
  color: #e6ebf4;
}
.level-row {
  display: flex;
  align-items: center;
  margin-top: 10px;
  height: 27px;
}
.level {
  height: 27px;
  padding: 0 10px;
  border-radius: 6px;
  font-size: 14.700px;
  font-weight: 500;
  line-height: 29px;
}
.level-beginner {
  background-color: #0ea5e9;
  color: #0f172a;
}
.level-intermediate {
  background-color: #a855f7;
  color: #fff;
}
.level-advanced {
  border: 1px solid #303c58;
  line-height: 27px;
  color: #e6ebf4;
}
.icon-score {
  width: 16px;
  height: 16px;
  margin: 0 4px 0 10px;
  color: #f59e0b;
}
.score {
  font-size: 16px;
  font-weight: 500;
}
.desc {
  margin: 9px 0 0;
  font-size: 17.050px;
  font-weight: 300;
  line-height: 25.300px;
  color: #94a3b8;
  white-space: nowrap;
}
.stats {
  width: 100%;
  display: grid;
  grid-template-columns: 229px 1fr;
  row-gap: 21px;
  margin-top: 30px;
}
.stat {
  display: flex;
  align-items: center;
  gap: 9px;
  height: 24px;
  font-size: 17.600px;
  font-weight: 300;
  color: #d5dbe6;
}
.stat .icon {
  width: 16px;
  height: 16px;
  margin-top: -2px;
  color: #8290a8;
  stroke-width: 1.500;
}
.chips {
  display: flex;
  flex-wrap: wrap;
  gap: 5px;
  margin-top: 19px;
}
.chips .chip {
  font-size: 14.100px;
}
.quiz-btn {
  width: 100%;
  height: 45px;
  margin-top: 21px;
  display: flex;
  align-items: center;
  justify-content: center;
  gap: 20px;
  background-color: #0ea5e9;
  border: 0;
  border-radius: 7px;
  font: 500 17px Inter, sans-serif;
  color: #0f172a;
}
.icon-play {
  width: 20px;
  height: 20px;
  stroke-width: 1.800;
  margin-top: -3px;
}

/* page scrollbar */
.scrollbar {
  width: 21px;
  flex: none;
  display: flex;
  flex-direction: column;
  align-items: center;
  background-color: #2b2c2c;
  padding: 6px 0;
}
.scroll-arrow {
  width: 14px;
  height: 11px;
  fill: #9c9c9c;
}
.scroll-track {
  flex: 1;
  padding-top: 7px;
}
.scroll-thumb {
  width: 10px;
  height: 552px;
  border-radius: 5px;
  background-color: #9c9c9c;
}

/* windows taskbar */
.taskbar {
  flex: none;
  height: 59px;
  margin-top: 6px;
  border-top: 1px solid #3a3a3a;
  display: flex;
  align-items: center;
  background-color: #1c1c1c;
  font-family: "Open Sans", sans-serif;
  color: #e8e8e8;
  font-size: 14px;
}
.weather {
  position: relative;
  width: 447px;
  display: flex;
  align-items: center;
  padding-left: 25px;
}
.cloud {
  width: 30px;
  height: 20px;
  margin-top: -6px;
}
.weather-badge {
  position: absolute;
  left: 39px;
  top: -3px;
  width: 20px;
  height: 20px;
  border-radius: 50%;
  background-color: #f5a3ab;
  color: #1a1a1a;
  font-size: 14px;
  line-height: 20px;
  text-align: center;
}
.weather-text {
  margin-left: 10px;
  line-height: 20px;
}
.cond {
  color: #c4c4c4;
}
.win-logo {
  width: 29px;
  height: 29px;
}
.search-box {
  width: 275px;
  height: 40px;
  margin-left: 17px;
  padding: 0 14px 0 15px;
  display: flex;
  align-items: center;
  gap: 13px;
  border-radius: 20px;
  background-color: #3b3b3b;
  font-size: 16px;
  color: #c8c8c8;
}
.search-icon {
  width: 18px;
  height: 18px;
  fill: none;
  stroke: #e0e0e0;
  stroke-width: 1.600;
}
.board {
  width: 45px;
  height: 26px;
  margin-left: auto;
}
.task-apps {
  display: flex;
  margin-left: 2px;
}
.task-app {
  position: relative;
  width: 55px;
  height: 50px;
  display: flex;
  align-items: center;
  justify-content: center;
  border-radius: 6px;
}
.task-app svg {
  width: 30px;
  height: 30px;
}
.task-active {
  width: 50px;
  margin: 0 2.500px;
  background-color: #2b2b2b;
}
.task-dot {
  position: absolute;
  left: 23px;
  bottom: 0;
  width: 8px;
  height: 3px;
  border-radius: 2px;
  background-color: #8a8a8a;
}
.task-dot-on {
  left: 15px;
  width: 20px;
  background-color: #4cc2ff;
}
.help-dot {
  position: absolute;
  top: 2px;
  right: 6px;
  width: 20px;
  height: 20px;
  border-radius: 50%;
  background-color: #ffc107;
}
.help-q {
  font-size: 22px;
  font-weight: 700;
  text-anchor: middle;
  fill: #fff;
}
.teams-t {
  font-size: 11px;
  text-anchor: middle;
  fill: #fff;
}
.tray {
  flex: 1;
  display: flex;
  align-items: center;
}
.tray-chevron {
  width: 16px;
  height: 16px;
  margin-left: 109px;
  fill: none;
  stroke: #e8e8e8;
  stroke-width: 1.600;
}
.lang {
  width: 32px;
  margin: 0 22px 0 24px;
  text-align: center;
  line-height: 21px;
}
.tray-icon {
  width: 20px;
  height: 20px;
  margin-right: 10px;
  fill: none;
  stroke: #f2f2f2;
  stroke-width: 1.300;
}
.clock {
  width: 89px;
  text-align: right;
  font-size: 15.300px;
  line-height: 20px;
  white-space: nowrap;
}
.bell {
  width: 20px;
  height: 22px;
  margin-left: 7px;
}
```
